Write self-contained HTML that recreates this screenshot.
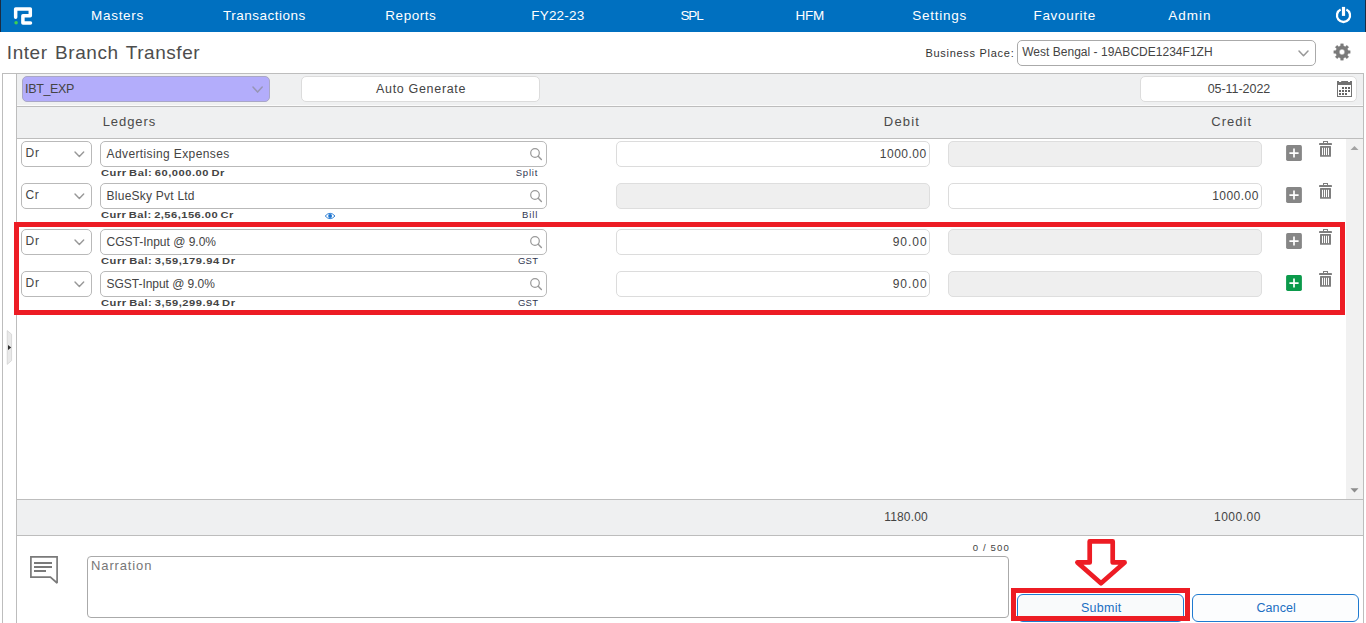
<!DOCTYPE html>
<html><head><meta charset="utf-8"><title>Inter Branch Transfer</title>
<style>
*{box-sizing:border-box;margin:0;padding:0}
html,body{width:1366px;height:623px;overflow:hidden;background:#fff;font-family:"Liberation Sans",sans-serif;color:#444}
div,svg{position:absolute}
.t{white-space:pre;line-height:20px;height:20px}
.b{background:#fff;border:1px solid #b9b9b9;border-radius:5px}
.l{border-color:#dcdcdc}
.d{background:#efefef;border-color:#dedede}
.ln{background:#bdbdbd}
</style></head><body>

<div style="left:0;top:0;width:1366px;height:32px;background:#0070c0"></div>
<div style="left:0;top:0;width:1px;height:32px;background:#1a2c44"></div>
<div style="left:1365px;top:0;width:1px;height:32px;background:#1a2c44"></div>
<svg style="left:10px;top:4px" width="26" height="24" viewBox="10 4 26 24"><path d="M15.65 17.3V8.95H30.3V15.85H22.9V22.9H30.5" fill="none" stroke="#fff" stroke-width="3.5" stroke-linejoin="round" stroke-linecap="round"/><circle cx="16.1" cy="22.8" r="1.75" fill="#3fd14f"/></svg>
<div class="t" style="left:91.1px;top:6.02px;font-size:13.5px;letter-spacing:0.68px;color:#fff;font-weight:400;">Masters</div>
<div class="t" style="left:223.10000000000002px;top:6.02px;font-size:13.5px;letter-spacing:0.48px;color:#fff;font-weight:400;">Transactions</div>
<div class="t" style="left:385.3px;top:6.02px;font-size:13.5px;letter-spacing:0.55px;color:#fff;font-weight:400;">Reports</div>
<div class="t" style="left:531.1999999999999px;top:6.02px;font-size:13.5px;letter-spacing:0.22px;color:#fff;font-weight:400;">FY22-23</div>
<div class="t" style="left:680.5px;top:6.02px;font-size:13.5px;letter-spacing:-1.17px;color:#fff;font-weight:400;">SPL</div>
<div class="t" style="left:795.5px;top:6.02px;font-size:13.5px;letter-spacing:-0.28px;color:#fff;font-weight:400;">HFM</div>
<div class="t" style="left:912.3px;top:6.02px;font-size:13.5px;letter-spacing:0.75px;color:#fff;font-weight:400;">Settings</div>
<div class="t" style="left:1033.5px;top:6.02px;font-size:13.5px;letter-spacing:0.68px;color:#fff;font-weight:400;">Favourite</div>
<div class="t" style="left:1168.3px;top:6.02px;font-size:13.5px;letter-spacing:0.96px;color:#fff;font-weight:400;">Admin</div>
<svg style="left:1333px;top:4px" width="22" height="22" viewBox="1333 4 22 22"><path d="M1340.63 9.56A6.55 6.55 0 1 0 1346.37 9.56" fill="none" stroke="#fff" stroke-width="2.3" stroke-linecap="butt"/><rect x="1341.9" y="6.9" width="3.2" height="9" fill="#fff"/></svg>
<div class="t" style="left:6.8px;top:42.62px;font-size:19px;letter-spacing:0.5599999999999999px;color:#4d4d4d;font-weight:400;word-spacing:1.6px;">Inter Branch Transfer</div>
<div class="t" style="left:925.4px;top:42.89px;font-size:11px;letter-spacing:0.72px;color:#333;font-weight:400;">Business Place:</div>
<div class="b" style="left:1017px;top:40px;width:299px;height:26px;border-color:#aaa"></div>
<div class="t" style="left:1022.2px;top:41.84px;font-size:12px;letter-spacing:0.02px;color:#444;font-weight:400;">West Bengal - 19ABCDE1234F1ZH</div>
<svg style="left:1296.5px;top:48.5px" width="13" height="8.8" viewBox="-2 -2 13 8.8"><path d="M0 0L4.5 4.8L9 0" fill="none" stroke="#989898" stroke-width="1.5" stroke-linecap="round" stroke-linejoin="round"/></svg>
<svg style="left:1331.6px;top:42.0px" width="20" height="20" viewBox="1331.6 42.0 20 20"><path d="M1340.13 45.87L1340.23 43.76L1342.97 43.76L1343.07 45.87L1344.89 46.63L1346.45 45.21L1348.39 47.15L1346.97 48.71L1347.73 50.53L1349.84 50.63L1349.84 53.37L1347.73 53.47L1346.97 55.29L1348.39 56.85L1346.45 58.79L1344.89 57.37L1343.07 58.13L1342.97 60.24L1340.23 60.24L1340.13 58.13L1338.31 57.37L1336.75 58.79L1334.81 56.85L1336.23 55.29L1335.47 53.47L1333.36 53.37L1333.36 50.63L1335.47 50.53L1336.23 48.71L1334.81 47.15L1336.75 45.21L1338.31 46.63ZM1344.25 52.0A2.65 2.65 0 1 0 1338.95 52.0A2.65 2.65 0 1 0 1344.25 52.0Z" fill="#7a7a7a" fill-rule="evenodd" stroke="#7a7a7a" stroke-width="0.3" stroke-linejoin="round"/></svg>
<div class="ln" style="left:2px;top:73px;width:1px;height:550px"></div>
<div class="ln" style="left:16px;top:73px;width:1px;height:550px"></div>
<div class="ln" style="left:1363px;top:73px;width:1px;height:550px"></div>
<div style="left:17px;top:74px;width:1346px;height:64px;background:#eff0f1"></div>
<div class="ln" style="left:2px;top:73px;width:1362px;height:1px"></div>
<div style="left:17px;top:105px;width:1346px;height:1px;background:#fbfbfb"></div>
<div class="ln" style="left:17px;top:106px;width:1346px;height:1px"></div>
<div class="ln" style="left:17px;top:138px;width:1346px;height:1px"></div>
<svg style="left:5px;top:328px" width="9" height="40" viewBox="5 328 9 40"><path d="M7.2 330.6L11.6 334.2V360.6L7.2 364.4Z" fill="#e9e9e9" stroke="#cfcfcf" stroke-width="0.7"/><path d="M8 344.9L11.2 347.4L8 349.9Z" fill="#2e2e2e"/></svg>
<div class="b" style="left:22px;top:76px;width:248px;height:26px;background:#b3adfb;border-color:#a9a7c6;border-radius:5px"></div>
<div class="t" style="left:25.1px;top:78.67px;font-size:12.5px;letter-spacing:-0.35px;color:#444;font-weight:400;">IBT_EXP</div>
<svg style="left:250.5px;top:84.5px" width="13.2" height="9.1" viewBox="-2 -2 13.2 9.1"><path d="M0 0L4.6 5.1L9.2 0" fill="none" stroke="#9795b4" stroke-width="1.5" stroke-linecap="round" stroke-linejoin="round"/></svg>
<div class="b l" style="left:301px;top:76px;width:239px;height:26px"></div>
<div class="t" style="left:376px;top:78.67px;font-size:12.5px;letter-spacing:0.68px;color:#444;font-weight:400;">Auto Generate</div>
<div class="b l" style="left:1140px;top:76px;width:217px;height:26px"></div>
<div class="t" style="left:1207.7px;top:78.77px;font-size:12.5px;letter-spacing:-0.05px;color:#444;font-weight:400;">05-11-2022</div>
<svg style="left:1336px;top:80px" width="18" height="18" viewBox="1336 80 18 18"><path d="M1337 81H1339V82H1341.2V81H1348V82H1350V81H1352V97H1337Z" fill="#727272"/><rect x="1338" y="85" width="13" height="11" fill="#fff"/><rect x="1342" y="87" width="2" height="2" fill="#666"/><rect x="1345" y="87" width="2" height="2" fill="#666"/><rect x="1348" y="87" width="2" height="2" fill="#666"/><rect x="1339" y="90" width="2" height="2" fill="#666"/><rect x="1342" y="90" width="2" height="2" fill="#666"/><rect x="1345" y="90" width="2" height="2" fill="#666"/><rect x="1348" y="90" width="2" height="2" fill="#666"/><rect x="1339" y="93" width="2" height="2" fill="#666"/><rect x="1342" y="93" width="2" height="2" fill="#666"/><rect x="1345" y="93" width="2" height="2" fill="#666"/></svg>
<div class="t" style="left:102.7px;top:111.50px;font-size:13px;letter-spacing:0.94px;color:#4a4a4a;font-weight:400;">Ledgers</div>
<div class="t" style="left:883.8px;top:111.60px;font-size:13px;letter-spacing:1.21px;color:#4a4a4a;font-weight:400;">Debit</div>
<div class="t" style="left:1211.2px;top:111.60px;font-size:13px;letter-spacing:1.06px;color:#4a4a4a;font-weight:400;">Credit</div>
<div style="left:1346px;top:139px;width:17px;height:360px;background:#f1f1f1"></div>
<svg style="left:1350px;top:145px" width="9" height="6" viewBox="0 0 9 6"><path d="M0.5 5L4.5 1L8.5 5Z" fill="#a3a3a3"/></svg>
<svg style="left:1350.2px;top:486.6px" width="9" height="6" viewBox="0 0 9 6"><path d="M0.5 1.2L4.5 5.4L8.5 1.2Z" fill="#8c8c8c"/></svg>
<div class="b" style="left:21px;top:141px;width:71px;height:26px"></div>
<div class="t" style="left:25.4px;top:143.14px;font-size:12px;letter-spacing:1.03px;color:#444;font-weight:400;">Dr</div>
<svg style="left:72.7px;top:149.6px" width="12.7" height="8.6" viewBox="-2 -2 12.7 8.6"><path d="M0 0L4.35 4.6L8.7 0" fill="none" stroke="#989898" stroke-width="1.4" stroke-linecap="round" stroke-linejoin="round"/></svg>
<div class="b" style="left:100px;top:141px;width:447px;height:26px"></div>
<div class="t" style="left:106.6px;top:143.54px;font-size:12px;letter-spacing:0.38px;color:#444;font-weight:400;">Advertising Expenses</div>
<svg style="left:528px;top:145.8px" width="16" height="16" viewBox="-7 -7 16 16"><circle cx="0" cy="0" r="4.3" fill="none" stroke="#999" stroke-width="1.2"/><path d="M3.2 3.2L6.4 6.5" stroke="#999" stroke-width="1.4" stroke-linecap="round"/></svg>
<div class="t" style="left:100.5px;top:162.87px;font-size:9.6px;letter-spacing:0.46px;color:#444;font-weight:700;transform:scaleX(1.16);transform-origin:0 0;word-spacing:-1px;">Curr Bal: 60,000.00 Dr</div>
<div class="t" style="right:827.8px;top:163.21px;font-size:9.5px;letter-spacing:0.8px;color:#2f3650;font-weight:400;">Split</div>
<div class="b l" style="left:616px;top:141px;width:314px;height:26px"></div>
<div class="t" style="right:439.4px;top:143.64px;font-size:12px;letter-spacing:0.48px;color:#444;font-weight:400;">1000.00</div>
<div class="b d" style="left:948px;top:141px;width:314px;height:26px"></div>
<svg style="left:1286px;top:145px" width="16" height="16" viewBox="0 0 16 16"><rect x="0.1" y="0.1" width="15.8" height="15.8" rx="1.6" fill="#868686"/><path d="M8 3.4V12.6M3.4 8.05H12.6" stroke="#fff" stroke-width="1.7"/></svg>
<svg style="left:1318px;top:141px" width="15" height="17" viewBox="0 0 15 17"><path d="M5 2.2V0H10V2.2H9V1H6V2.2Z" fill="#7e7e7e"/><rect x="1" y="2.1" width="13" height="1.8" rx="0.4" fill="#7e7e7e"/><rect x="2" y="5" width="11" height="10.8" rx="0.5" fill="#7e7e7e"/><rect x="4" y="6.8" width="1" height="7.3" fill="#fff"/><rect x="6" y="6.8" width="1" height="7.3" fill="#fff"/><rect x="8" y="6.8" width="1" height="7.3" fill="#fff"/><rect x="10" y="6.8" width="1" height="7.3" fill="#fff"/></svg>
<div class="b" style="left:21px;top:183px;width:71px;height:26px"></div>
<div class="t" style="left:25.4px;top:185.14px;font-size:12px;letter-spacing:0.63px;color:#444;font-weight:400;">Cr</div>
<svg style="left:72.7px;top:191.6px" width="12.7" height="8.6" viewBox="-2 -2 12.7 8.6"><path d="M0 0L4.35 4.6L8.7 0" fill="none" stroke="#989898" stroke-width="1.4" stroke-linecap="round" stroke-linejoin="round"/></svg>
<div class="b" style="left:100px;top:183px;width:447px;height:26px"></div>
<div class="t" style="left:106.6px;top:185.54px;font-size:12px;letter-spacing:0.23px;color:#444;font-weight:400;">BlueSky Pvt Ltd</div>
<svg style="left:528px;top:187.8px" width="16" height="16" viewBox="-7 -7 16 16"><circle cx="0" cy="0" r="4.3" fill="none" stroke="#999" stroke-width="1.2"/><path d="M3.2 3.2L6.4 6.5" stroke="#999" stroke-width="1.4" stroke-linecap="round"/></svg>
<div class="t" style="left:100.5px;top:204.87px;font-size:9.6px;letter-spacing:0.41px;color:#444;font-weight:700;transform:scaleX(1.16);transform-origin:0 0;word-spacing:-1px;">Curr Bal: 2,56,156.00 Cr</div>
<div class="t" style="right:827.8px;top:205.21px;font-size:9.5px;letter-spacing:0.91px;color:#2f3650;font-weight:400;">Bill</div>
<div class="b d" style="left:616px;top:183px;width:314px;height:26px"></div>
<div class="b l" style="left:948px;top:183px;width:314px;height:26px"></div>
<div class="t" style="right:107.09999999999991px;top:185.64px;font-size:12px;letter-spacing:0.48px;color:#444;font-weight:400;">1000.00</div>
<svg style="left:1286px;top:187px" width="16" height="16" viewBox="0 0 16 16"><rect x="0.1" y="0.1" width="15.8" height="15.8" rx="1.6" fill="#868686"/><path d="M8 3.4V12.6M3.4 8.05H12.6" stroke="#fff" stroke-width="1.7"/></svg>
<svg style="left:1318px;top:183px" width="15" height="17" viewBox="0 0 15 17"><path d="M5 2.2V0H10V2.2H9V1H6V2.2Z" fill="#7e7e7e"/><rect x="1" y="2.1" width="13" height="1.8" rx="0.4" fill="#7e7e7e"/><rect x="2" y="5" width="11" height="10.8" rx="0.5" fill="#7e7e7e"/><rect x="4" y="6.8" width="1" height="7.3" fill="#fff"/><rect x="6" y="6.8" width="1" height="7.3" fill="#fff"/><rect x="8" y="6.8" width="1" height="7.3" fill="#fff"/><rect x="10" y="6.8" width="1" height="7.3" fill="#fff"/></svg>
<div class="b" style="left:21px;top:229px;width:71px;height:26px"></div>
<div class="t" style="left:25.4px;top:231.14px;font-size:12px;letter-spacing:1.03px;color:#444;font-weight:400;">Dr</div>
<svg style="left:72.7px;top:237.6px" width="12.7" height="8.6" viewBox="-2 -2 12.7 8.6"><path d="M0 0L4.35 4.6L8.7 0" fill="none" stroke="#989898" stroke-width="1.4" stroke-linecap="round" stroke-linejoin="round"/></svg>
<div class="b" style="left:100px;top:229px;width:447px;height:26px"></div>
<div class="t" style="left:106.6px;top:231.54px;font-size:12px;letter-spacing:-0.01px;color:#444;font-weight:400;">CGST-Input @ 9.0%</div>
<svg style="left:528px;top:233.8px" width="16" height="16" viewBox="-7 -7 16 16"><circle cx="0" cy="0" r="4.3" fill="none" stroke="#999" stroke-width="1.2"/><path d="M3.2 3.2L6.4 6.5" stroke="#999" stroke-width="1.4" stroke-linecap="round"/></svg>
<div class="t" style="left:100.5px;top:250.87px;font-size:9.6px;letter-spacing:0.47px;color:#444;font-weight:700;transform:scaleX(1.16);transform-origin:0 0;word-spacing:-1px;">Curr Bal: 3,59,179.94 Dr</div>
<div class="t" style="right:827.8px;top:251.21px;font-size:9.5px;letter-spacing:0.23px;color:#2f3650;font-weight:400;">GST</div>
<div class="b l" style="left:616px;top:229px;width:314px;height:26px"></div>
<div class="t" style="right:438.4px;top:231.64px;font-size:12px;letter-spacing:0.97px;color:#444;font-weight:400;">90.00</div>
<div class="b d" style="left:948px;top:229px;width:314px;height:26px"></div>
<svg style="left:1286px;top:233px" width="16" height="16" viewBox="0 0 16 16"><rect x="0.1" y="0.1" width="15.8" height="15.8" rx="1.6" fill="#868686"/><path d="M8 3.4V12.6M3.4 8.05H12.6" stroke="#fff" stroke-width="1.7"/></svg>
<svg style="left:1318px;top:229px" width="15" height="17" viewBox="0 0 15 17"><path d="M5 2.2V0H10V2.2H9V1H6V2.2Z" fill="#7e7e7e"/><rect x="1" y="2.1" width="13" height="1.8" rx="0.4" fill="#7e7e7e"/><rect x="2" y="5" width="11" height="10.8" rx="0.5" fill="#7e7e7e"/><rect x="4" y="6.8" width="1" height="7.3" fill="#fff"/><rect x="6" y="6.8" width="1" height="7.3" fill="#fff"/><rect x="8" y="6.8" width="1" height="7.3" fill="#fff"/><rect x="10" y="6.8" width="1" height="7.3" fill="#fff"/></svg>
<div class="b" style="left:21px;top:271px;width:71px;height:26px"></div>
<div class="t" style="left:25.4px;top:273.14px;font-size:12px;letter-spacing:1.03px;color:#444;font-weight:400;">Dr</div>
<svg style="left:72.7px;top:279.6px" width="12.7" height="8.6" viewBox="-2 -2 12.7 8.6"><path d="M0 0L4.35 4.6L8.7 0" fill="none" stroke="#989898" stroke-width="1.4" stroke-linecap="round" stroke-linejoin="round"/></svg>
<div class="b" style="left:100px;top:271px;width:447px;height:26px"></div>
<div class="t" style="left:106.6px;top:273.54px;font-size:12px;letter-spacing:-0.04px;color:#444;font-weight:400;">SGST-Input @ 9.0%</div>
<svg style="left:528px;top:275.8px" width="16" height="16" viewBox="-7 -7 16 16"><circle cx="0" cy="0" r="4.3" fill="none" stroke="#999" stroke-width="1.2"/><path d="M3.2 3.2L6.4 6.5" stroke="#999" stroke-width="1.4" stroke-linecap="round"/></svg>
<div class="t" style="left:100.5px;top:292.87px;font-size:9.6px;letter-spacing:0.47px;color:#444;font-weight:700;transform:scaleX(1.16);transform-origin:0 0;word-spacing:-1px;">Curr Bal: 3,59,299.94 Dr</div>
<div class="t" style="right:827.8px;top:293.21px;font-size:9.5px;letter-spacing:0.23px;color:#2f3650;font-weight:400;">GST</div>
<div class="b l" style="left:616px;top:271px;width:314px;height:26px"></div>
<div class="t" style="right:438.4px;top:273.64px;font-size:12px;letter-spacing:0.97px;color:#444;font-weight:400;">90.00</div>
<div class="b d" style="left:948px;top:271px;width:314px;height:26px"></div>
<svg style="left:1286px;top:275px" width="16" height="16" viewBox="0 0 16 16"><rect x="0.1" y="0.1" width="15.8" height="15.8" rx="1.6" fill="#0b9a4b"/><path d="M8 3.4V12.6M3.4 8.05H12.6" stroke="#fff" stroke-width="1.7"/></svg>
<svg style="left:1318px;top:271px" width="15" height="17" viewBox="0 0 15 17"><path d="M5 2.2V0H10V2.2H9V1H6V2.2Z" fill="#7e7e7e"/><rect x="1" y="2.1" width="13" height="1.8" rx="0.4" fill="#7e7e7e"/><rect x="2" y="5" width="11" height="10.8" rx="0.5" fill="#7e7e7e"/><rect x="4" y="6.8" width="1" height="7.3" fill="#fff"/><rect x="6" y="6.8" width="1" height="7.3" fill="#fff"/><rect x="8" y="6.8" width="1" height="7.3" fill="#fff"/><rect x="10" y="6.8" width="1" height="7.3" fill="#fff"/></svg>
<svg style="left:324px;top:212px" width="12" height="8" viewBox="324 212 12 8"><path d="M325.2 216Q330.1 210.6 335 216Q330.1 221.4 325.2 216Z" fill="#fff" stroke="#1a73d0" stroke-width="0.9"/><circle cx="330.1" cy="216" r="1.9" fill="#1a73d0"/></svg>
<div style="left:14px;top:222px;width:1331px;height:93px;border:5px solid #ed1c24"></div>
<div style="left:17px;top:500px;width:1346px;height:35px;background:#eff0f1"></div>
<div class="ln" style="left:17px;top:499px;width:1346px;height:1px"></div>
<div class="ln" style="left:17px;top:535px;width:1346px;height:1px"></div>
<div class="t" style="right:438.20000000000005px;top:506.54px;font-size:12px;letter-spacing:0.15px;color:#444;font-weight:400;">1180.00</div>
<div class="t" style="right:105.20000000000005px;top:506.54px;font-size:12px;letter-spacing:0.48px;color:#444;font-weight:400;">1000.00</div>
<svg style="left:28px;top:554px" width="32" height="32" viewBox="28 554 32 32"><path d="M30.9 556.9H57.1V583L50.4 577.1H30.9Z" fill="#fff" stroke="#7a7a7a" stroke-width="1.7" stroke-linejoin="miter" stroke-miterlimit="2"/><path d="M34 563H52M34 567H52M34 571H46" stroke="#7a7a7a" stroke-width="1.9"/></svg>
<div class="b" style="left:87px;top:556px;width:922px;height:62px;border-color:#aaa;border-radius:4px"></div>
<div class="t" style="left:91.1px;top:555.50px;font-size:13px;letter-spacing:0.85px;color:#777;font-weight:400;">Narration</div>
<div class="t" style="right:356px;top:537.77px;font-size:9.6px;letter-spacing:1.13px;color:#444;font-weight:400;">0 / 500</div>
<div class="b" style="left:1017px;top:594px;width:167px;height:28px;border-color:#1f7ad0;border-radius:6px;background:#f9fafb"></div>
<div class="b" style="left:1192px;top:594px;width:167px;height:28px;border-color:#1f7ad0;border-radius:6px;background:#fcfdfe"></div>
<div class="t" style="left:1080.9px;top:597.67px;font-size:12.5px;letter-spacing:0.28px;color:#1b6ec2;font-weight:400;">Submit</div>
<div class="t" style="left:1256.4px;top:597.67px;font-size:12.5px;letter-spacing:0.12px;color:#1b6ec2;font-weight:400;">Cancel</div>
<div style="left:1011px;top:588px;width:179px;height:33px;border:5px solid #ed1c24"></div>
<svg style="left:1070px;top:536px" width="62" height="54" viewBox="1070 536 62 54"><path d="M1089.7 541.4H1112.7V562.4H1124.6L1101 583.3L1077.4 562.4H1089.7Z" fill="#fff" stroke="#ed1c24" stroke-width="4.7" stroke-linejoin="round"/></svg>
</body></html>
